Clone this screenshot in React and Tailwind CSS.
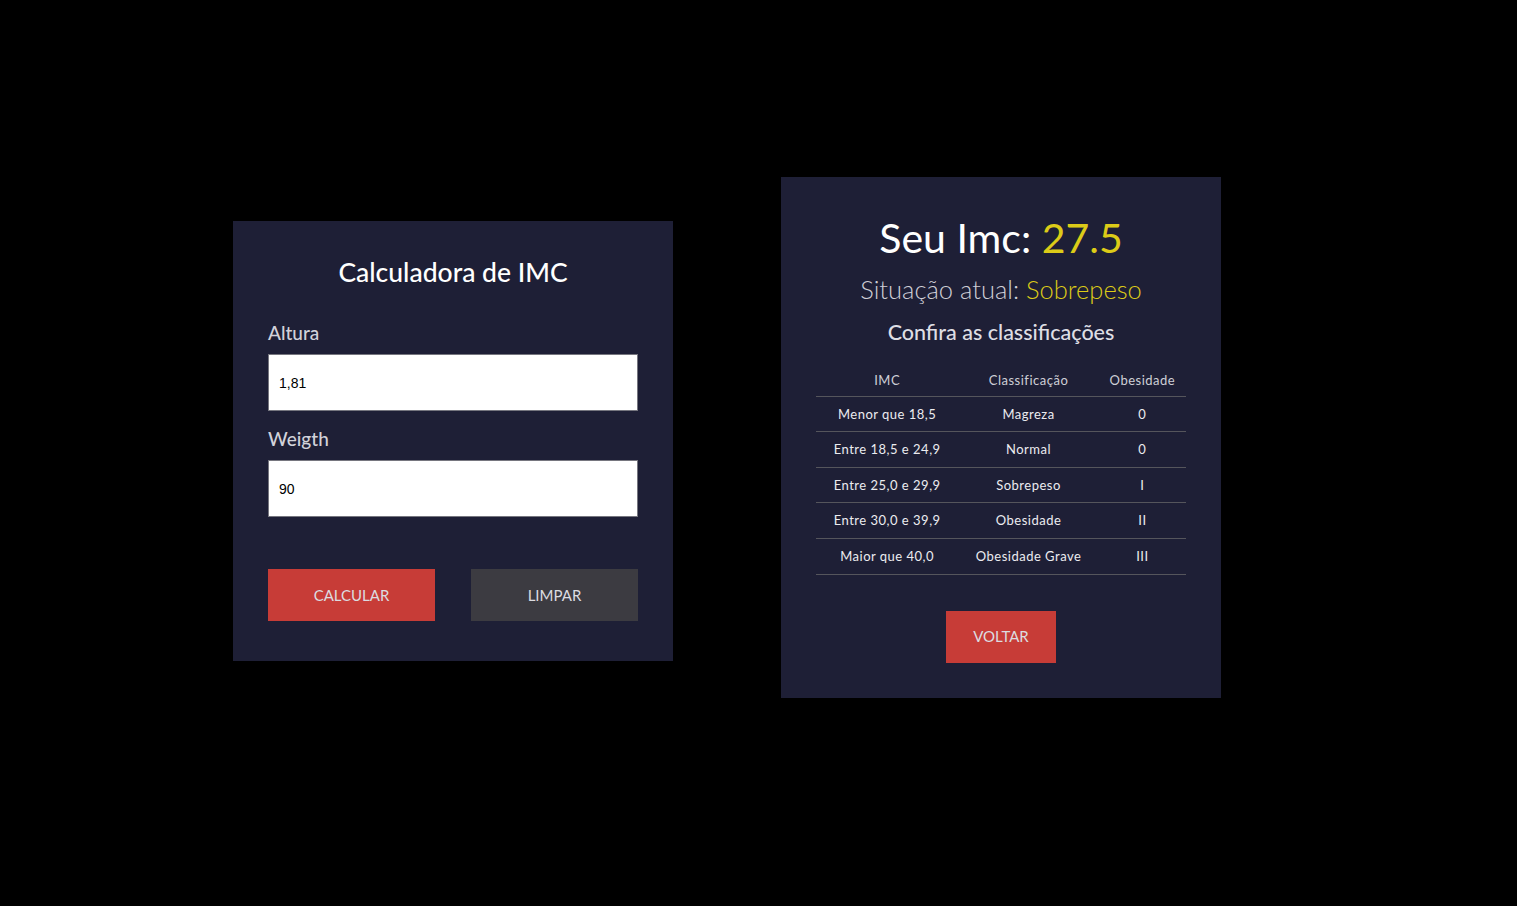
import React, { useState } from "react";

const rows = [
  { imc: "Menor que 18,5", classe: "Magreza", obesidade: "0" },
  { imc: "Entre 18,5 e 24,9", classe: "Normal", obesidade: "0" },
  { imc: "Entre 25,0 e 29,9", classe: "Sobrepeso", obesidade: "I" },
  { imc: "Entre 30,0 e 39,9", classe: "Obesidade", obesidade: "II" },
  { imc: "Maior que 40,0", classe: "Obesidade Grave", obesidade: "III" },
];

function Field({ label, value, onChange }) {
  return (
    <div className="flex flex-col">
      <label className="text-[19px] leading-[22px] font-medium text-[#d2d2da]">
        {label}
      </label>
      <input
        type="text"
        value={value}
        onChange={(e) => onChange(e.target.value)}
        className="mt-[10px] h-[57px] w-full bg-white border border-[#76767f] px-[10px] text-[14px] text-black outline-none font-['Liberation_Sans',Arial,sans-serif]"
      />
    </div>
  );
}

function Calculator() {
  const [height, setHeight] = useState("1,81");
  const [weight, setWeight] = useState("90");

  return (
    <div className="w-[440px] h-[440px] mt-[221px] bg-[#1e1f36] px-[35px] pt-[35px] pb-[40px] flex flex-col">
      <h2 className="text-center text-[26.5px] leading-[32px] font-medium text-white">
        Calculadora de IMC
      </h2>
      <div className="mt-[34px] flex flex-col gap-[17px]">
        <Field label="Altura" value={height} onChange={setHeight} />
        <Field label="Weigth" value={weight} onChange={setWeight} />
      </div>
      <div className="mt-[52px] flex justify-between">
        <button className="w-[167px] h-[52px] bg-[#c73c37] text-[15px] text-[#dcdce0] uppercase">
          Calcular
        </button>
        <button className="w-[167px] h-[52px] bg-[#3c3b41] text-[15px] text-[#dcdce0] uppercase">
          Limpar
        </button>
      </div>
    </div>
  );
}

function Result() {
  return (
    <div className="w-[440px] mt-[177px] bg-[#1e1f36] px-[35px] pt-[36px] pb-[35px] flex flex-col items-center">
      <h1 className="text-[41px] leading-[50px] font-normal text-white">
        Seu Imc: <span className="text-[#dccb18]">27.5</span>
      </h1>
      <h2 className="mt-[11px] text-[25.5px] leading-[30px] font-light text-[#cfcfd6]">
        Situação atual: <span className="text-[#dccb18]">Sobrepeso</span>
      </h2>
      <h3 className="mt-[16px] text-[21.5px] leading-[24px] font-medium text-[#dedee4]">
        Confira as classificações
      </h3>
      <table className="mt-[17px] w-full text-[13px] leading-[16.6px] tracking-[0.5px] text-center">
        <thead>
          <tr className="border-b border-[#55555c] text-[#cfcfd6]">
            <th className="pt-[11px] pb-[7px] font-normal">IMC</th>
            <th className="pt-[11px] pb-[7px] font-normal">Classificação</th>
            <th className="pt-[11px] pb-[7px] font-normal">Obesidade</th>
          </tr>
        </thead>
        <tbody className="text-[#ececf0]">
          {rows.map((r) => (
            <tr key={r.imc} className="border-b border-[#55555c]">
              <td className="py-[9px]">{r.imc}</td>
              <td className="py-[9px]">{r.classe}</td>
              <td className="py-[9px]">{r.obesidade}</td>
            </tr>
          ))}
        </tbody>
      </table>
      <button className="mt-[36px] w-[110px] h-[52px] bg-[#c73c37] text-[15px] text-[#dcdce0] uppercase">
        Voltar
      </button>
    </div>
  );
}

export default function App() {
  return (
    <div className="min-h-screen w-full bg-black font-['Lato',sans-serif]">
      <div className="flex items-start pl-[233px] gap-[108px]">
        <Calculator />
        <Result />
      </div>
    </div>
  );
}
